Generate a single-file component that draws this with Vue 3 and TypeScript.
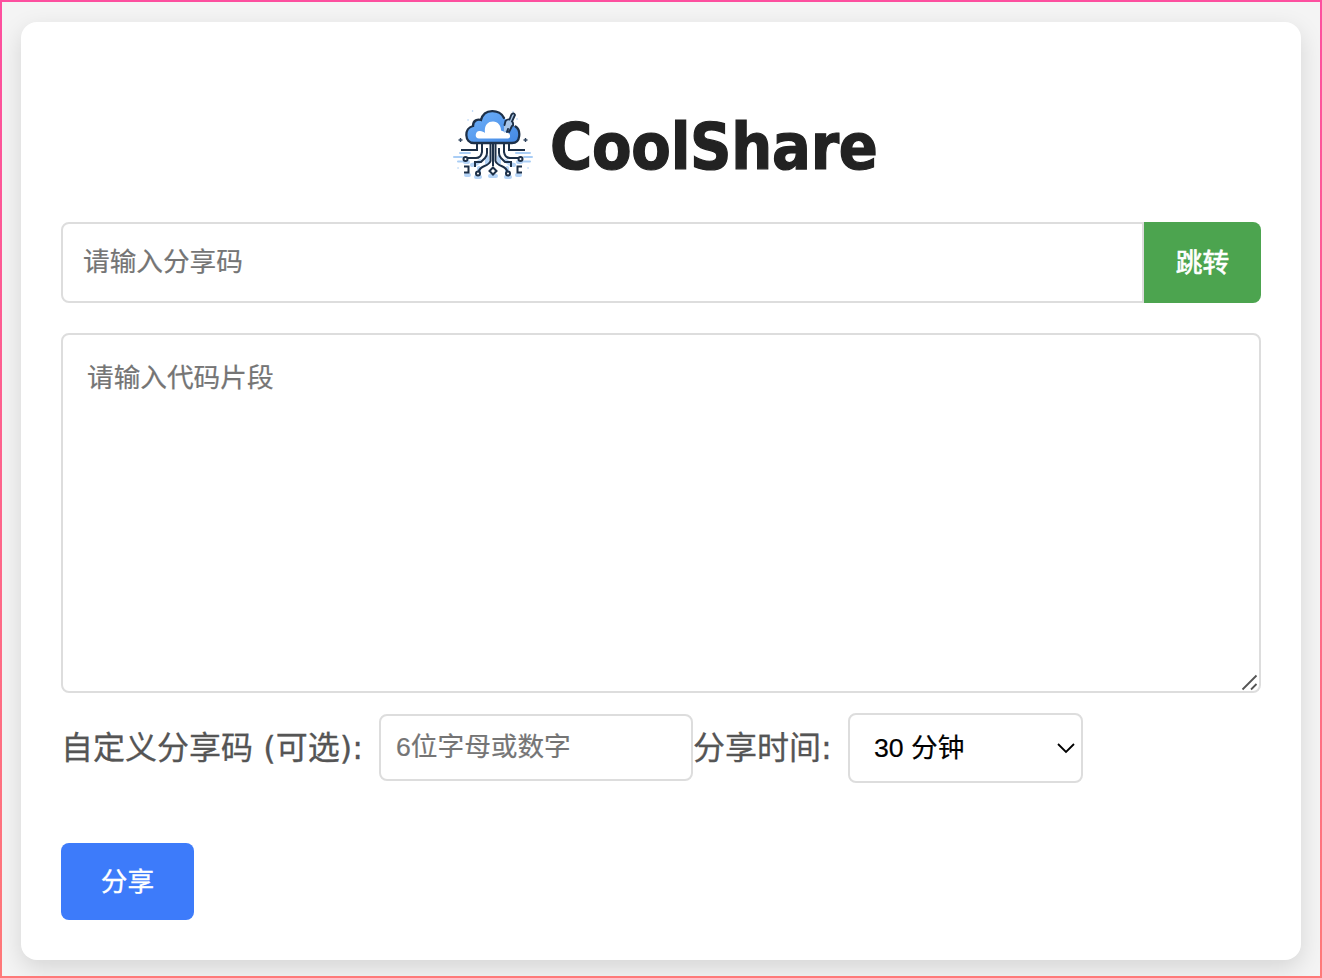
<script setup lang="ts">
import { ref } from 'vue'

const shareCode = ref('')
const snippet = ref('')
const customCode = ref('')
const duration = ref('30')
const durations = [
  { value: '30', label: '30 分钟' },
  { value: '60', label: '1 小时' },
  { value: '1440', label: '1 天' },
]
</script>

<template>
  <div class="frame">
    <main class="card">
      <h1 class="brand">
        <svg class="logo" viewBox="0 0 110 90" width="110" height="90" fill="none" aria-hidden="true">
          <defs>
            <linearGradient id="cloud" x1="0" y1="0" x2="1" y2="1">
              <stop offset="0" stop-color="#70b2fa" />
              <stop offset="1" stop-color="#4388e4" />
            </linearGradient>
          </defs>
          <g stroke="#a9cdf5" stroke-width="2" stroke-linecap="round">
            <path d="M20 53h10M14 57h8M18 61.500h7M76 53h14M84 57h8M82 61.500h8" />
            <path d="M18 68h.1M88 68h.1M32.500 11h.1M73 12h.1M77 19h.1M28 20h.1" stroke-width="1.500" />
          </g>
          <g stroke="#b4d3f6" stroke-width="4" stroke-linecap="round">
            <path d="M32 65l4-1 4-3M74 65l-4-1-4-3M39 68v4M67 68v4M26 75h3M77 75h3M36 77h4M66 77h4M50 76h6M47 57v6M59 57v6M25 62h3M78 62h3" />
          </g>
          <path d="M34 43C24 43 24 28 33 26C33 20 38 19 41 20C44 8 60 9 64 18L74 26C81 30 81 43 72 43Z" fill="url(#cloud)" />
          <path d="M39 38.500c-5 0-4-8 1-7.500 2 0 4 1 5 2-1-7 2-11.500 8-11.500 5 0 8 4 8 9l8 3c2 2 1 5-1 5z" fill="#fff" />
          <path d="M64 18C60 9 44 8 41 20C38 19 33 20 33 26C24 28 24 43 34 43H72C81 43 81 30 75.500 26.500" stroke="#1d3048" stroke-width="2.300" stroke-linecap="round" />
          <path d="M65 22c0-3 3-4 5-3l3-5c1-1 3 0 2 2l-3 6c2 2 1 5-1 6l-3 5-1-3-3 3v-6z" fill="#a9c6e8" />
          <path d="M64.500 25l1-4q2-2 4-1.500l2-5q2.500-2.500 3.500.5l-3 6.500q1.500 1 1 4M68 29l-1 3M72 26l-3 6" stroke="#1d3048" stroke-width="1.900" stroke-linecap="round" />
          <g stroke="#1d3048" stroke-width="2">
            <path d="M37 44v6H21M69 44v6h16M42 44v8q-1 6-6 6h-9M64 44v8q1 6 6 6h9M47 48v5q0 3-2 5l-4 4h-6v5M59 48v5q0 3 2 5l4 4h6v5M50.500 44v17q-1 3-6 5-5 2-6 6M55.500 44v17q1 3 6 5 5 2 6 6M53 44v22" />
            <path d="M24 66.500h4.500v6H24M82 66.500h-4.500v6H82" />
            <path d="M53 67.500l3.500 3.500-3.500 3.500-3.500-3.500z" fill="#fff" />
            <circle cx="25.500" cy="59" r="2" fill="#fff" />
            <circle cx="80.500" cy="59" r="2" fill="#fff" />
            <circle cx="38" cy="73.500" r="2" fill="#fff" />
            <circle cx="68" cy="73.500" r="2" fill="#fff" />
          </g>
          <path d="M20.500 38v4M18.500 40h4M85.500 38v4M83.500 40h4" stroke="#32465f" stroke-width="1.400" />
        </svg>
        <span class="name">CoolShare</span>
      </h1>

      <form class="jump" @submit.prevent>
        <input v-model="shareCode" class="field code" type="text" placeholder="请输入分享码" />
        <button class="go" type="submit">跳转</button>
      </form>

      <div class="editor">
        <textarea v-model="snippet" class="field snippet" placeholder="请输入代码片段"></textarea>
        <svg class="grip" width="18" height="18" viewBox="0 0 18 18" aria-hidden="true">
          <path d="M1.500 15.500l14-14M10 15.500l5.500-5.500" stroke="#555" stroke-width="1.800" />
        </svg>
      </div>

      <div class="options">
        <label class="label custom-label" for="custom">自定义分享码 (可选):</label>
        <input id="custom" v-model="customCode" class="field custom" type="text" placeholder="6位字母或数字" />
        <label class="label time-label" for="time">分享时间:</label>
        <div class="select-wrap">
          <select id="time" v-model="duration" class="field time">
            <option v-for="d in durations" :key="d.value" :value="d.value">{{ d.label }}</option>
          </select>
          <svg class="chevron" width="20" height="12" viewBox="0 0 20 12" fill="none" aria-hidden="true">
            <path d="M2 2l8 8 8-8" stroke="#000" stroke-width="1.800" />
          </svg>
        </div>
      </div>

      <button class="share" type="button">分享</button>
    </main>
  </div>
</template>

<style>
body {
  overflow: hidden;
}
</style>

<style scoped>
.frame {
  box-sizing: border-box;
  width: 1322px;
  height: 978px;
  padding: 20px 19px 16px;
  border: 2px solid;
  border-image: linear-gradient(#fd4f9f, #ff7979) 1;
  background: #f4f4f4;
  font-family: "Liberation Sans", "Noto Sans CJK SC", sans-serif;
  overflow: hidden;
}
.card {
  box-sizing: border-box;
  width: 1280px;
  height: 938px;
  padding: 78px 40px 40px;
  border-radius: 16px;
  background: #fff;
  box-shadow: 0 8px 24px rgba(0, 0, 0, 0.13);
}
.brand {
  display: flex;
  height: 90px;
  margin: 0 0 32px;
  padding-left: 379px;
}
.logo {
  flex: none;
}
.name {
  color: #222;
  font: bold 64px/94px "DejaVu Sans Condensed", "DejaVu Sans", sans-serif;
  font-stretch: condensed;
  letter-spacing: -0.25px;
  -webkit-text-stroke: 1.2px #222;
}
.field {
  box-sizing: border-box;
  display: block;
  margin: 0;
  border: 2px solid #ddd;
  border-radius: 8px;
  outline: none;
  background: #fff;
  color: #000;
  font-family: inherit;
  font-size: 26.6667px;
  -webkit-text-stroke: 0.2px;
}
.field::placeholder {
  color: #757575;
  opacity: 1;
}
.jump {
  display: flex;
  height: 81px;
  margin-bottom: 30px;
}
.code {
  flex: 1;
  padding: 0 20px;
  border-radius: 8px 0 0 8px;
}
.go,
.share {
  display: block;
  margin: 0;
  padding: 0 0 4px;
  border: 0;
  color: #fff;
  font-family: inherit;
  font-size: 26.6667px;
  -webkit-text-stroke: 0.3px;
}
.go {
  width: 117px;
  border-radius: 0 8px 8px 0;
  background: #4ca44f;
  -webkit-text-stroke: 0.7px;
}
.editor {
  position: relative;
  height: 360px;
  margin-bottom: 20px;
}
.snippet {
  width: 100%;
  height: 100%;
  padding: 24px;
  resize: none;
  line-height: 38px;
}
.grip {
  position: absolute;
  right: 2px;
  bottom: 1px;
}
.options {
  display: flex;
  align-items: center;
  height: 70px;
  margin-bottom: 60px;
}
.label {
  color: #555;
  font-family: "DejaVu Sans", "Noto Sans CJK SC", sans-serif;
  font-size: 32px;
  line-height: 48px;
  white-space: nowrap;
  -webkit-text-stroke: 0.3px;
}
.custom-label {
  width: 318px;
}
.custom {
  width: 314px;
  height: 67px;
  margin-bottom: 2px;
  padding: 0 15px;
}
.time-label {
  width: 155px;
}
.select-wrap {
  position: relative;
}
.time {
  width: 235px;
  height: 70px;
  padding: 0 24px;
  appearance: none;
}
.chevron {
  position: absolute;
  right: 7px;
  top: 29px;
}
.share {
  width: 133px;
  height: 77px;
  border-radius: 8px;
  background: #3d7bfa;
}
</style>
